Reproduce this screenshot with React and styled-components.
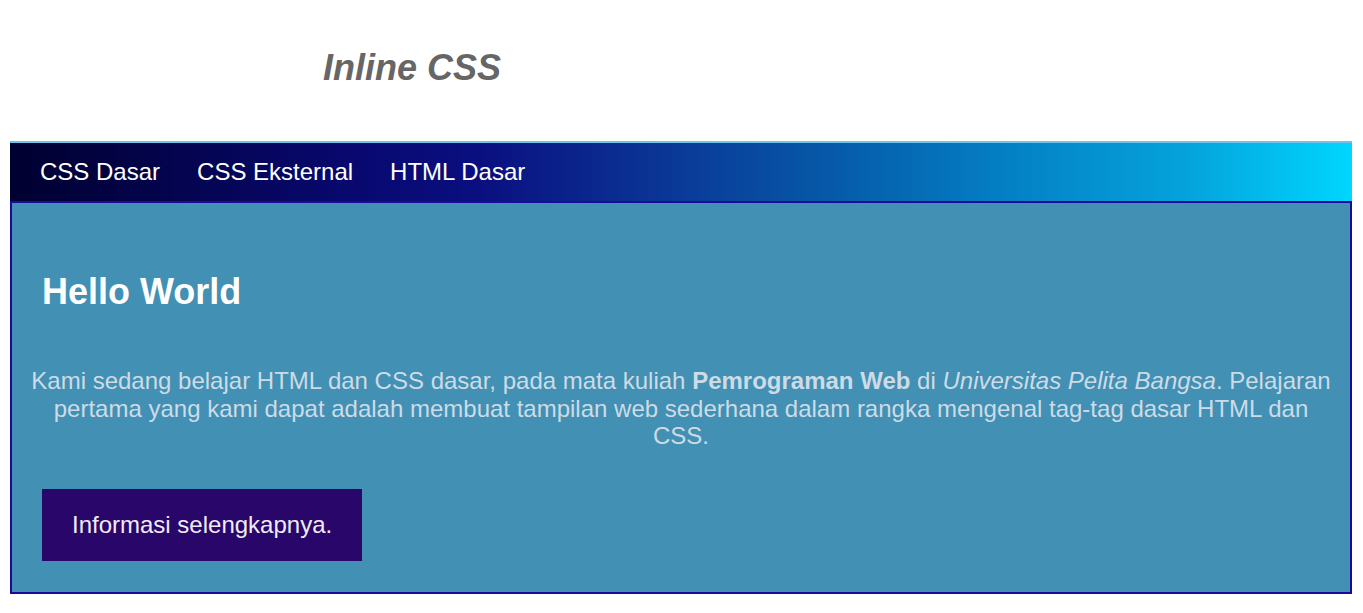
import React from "react";
import styled, { createGlobalStyle } from "styled-components";

const GlobalStyle = createGlobalStyle`
  html, body { margin: 0; padding: 0; background: #ffffff; }
  body { font-family: "Liberation Sans", Arial, sans-serif; }
`;

const Page = styled.div`
  margin: 0 11px 0 10px;
`;

const Header = styled.header`
  padding: 47px 0 53px 313px;
`;

const Title = styled.h1`
  margin: 0;
  font-size: 36px;
  line-height: 41px;
  font-style: italic;
  font-weight: bold;
  color: #666666;
`;

const NavBar = styled.nav`
  display: flex;
  gap: 37px;
  padding: 15px 30px;
  border-top: 2px solid #6cc6ec;
  background: linear-gradient(
    to right,
    #000030 0%,
    #08086e 25%,
    #0a0f80 35%,
    #0a3a98 50%,
    #0656a6 60%,
    #0482c6 75%,
    #04a4dc 88%,
    #00d6ff 100%
  );
`;

const NavLink = styled.a`
  font-size: 24px;
  line-height: 28px;
  color: #ffffff;
  text-decoration: none;
`;

const Content = styled.section`
  border: 2px solid #1a0a9c;
  background: #4290b3;
  padding: 68px 0 31px;
`;

const Heading = styled.h2`
  margin: 0 30px 55px;
  font-size: 36px;
  line-height: 41px;
  font-weight: bold;
  color: #ffffff;
`;

const Paragraph = styled.p`
  margin: 0 0 39px;
  padding: 0 12px;
  font-size: 24px;
  line-height: 27.5px;
  text-align: center;
  color: #cddbe7;
`;

const Button = styled.button`
  margin-left: 30px;
  padding: 22px 30px;
  border: none;
  background: #28066a;
  color: #f1ebf7;
  font-family: "Liberation Sans", Arial, sans-serif;
  font-size: 24px;
  line-height: 28px;
  cursor: pointer;
`;

export default function App() {
  return (
    <>
      <GlobalStyle />
      <Page>
        <Header>
          <Title>Inline CSS</Title>
        </Header>
        <NavBar>
          <NavLink href="#">CSS Dasar</NavLink>
          <NavLink href="#">CSS Eksternal</NavLink>
          <NavLink href="#">HTML Dasar</NavLink>
        </NavBar>
        <Content>
          <Heading>Hello World</Heading>
          <Paragraph>
            Kami sedang belajar HTML dan CSS dasar, pada mata kuliah{" "}
            <b>Pemrograman Web</b> di <i>Universitas Pelita Bangsa</i>.
            Pelajaran pertama yang kami dapat adalah membuat tampilan web
            sederhana dalam rangka mengenal tag-tag dasar HTML dan CSS.
          </Paragraph>
          <Button>Informasi selengkapnya.</Button>
        </Content>
      </Page>
    </>
  );
}
